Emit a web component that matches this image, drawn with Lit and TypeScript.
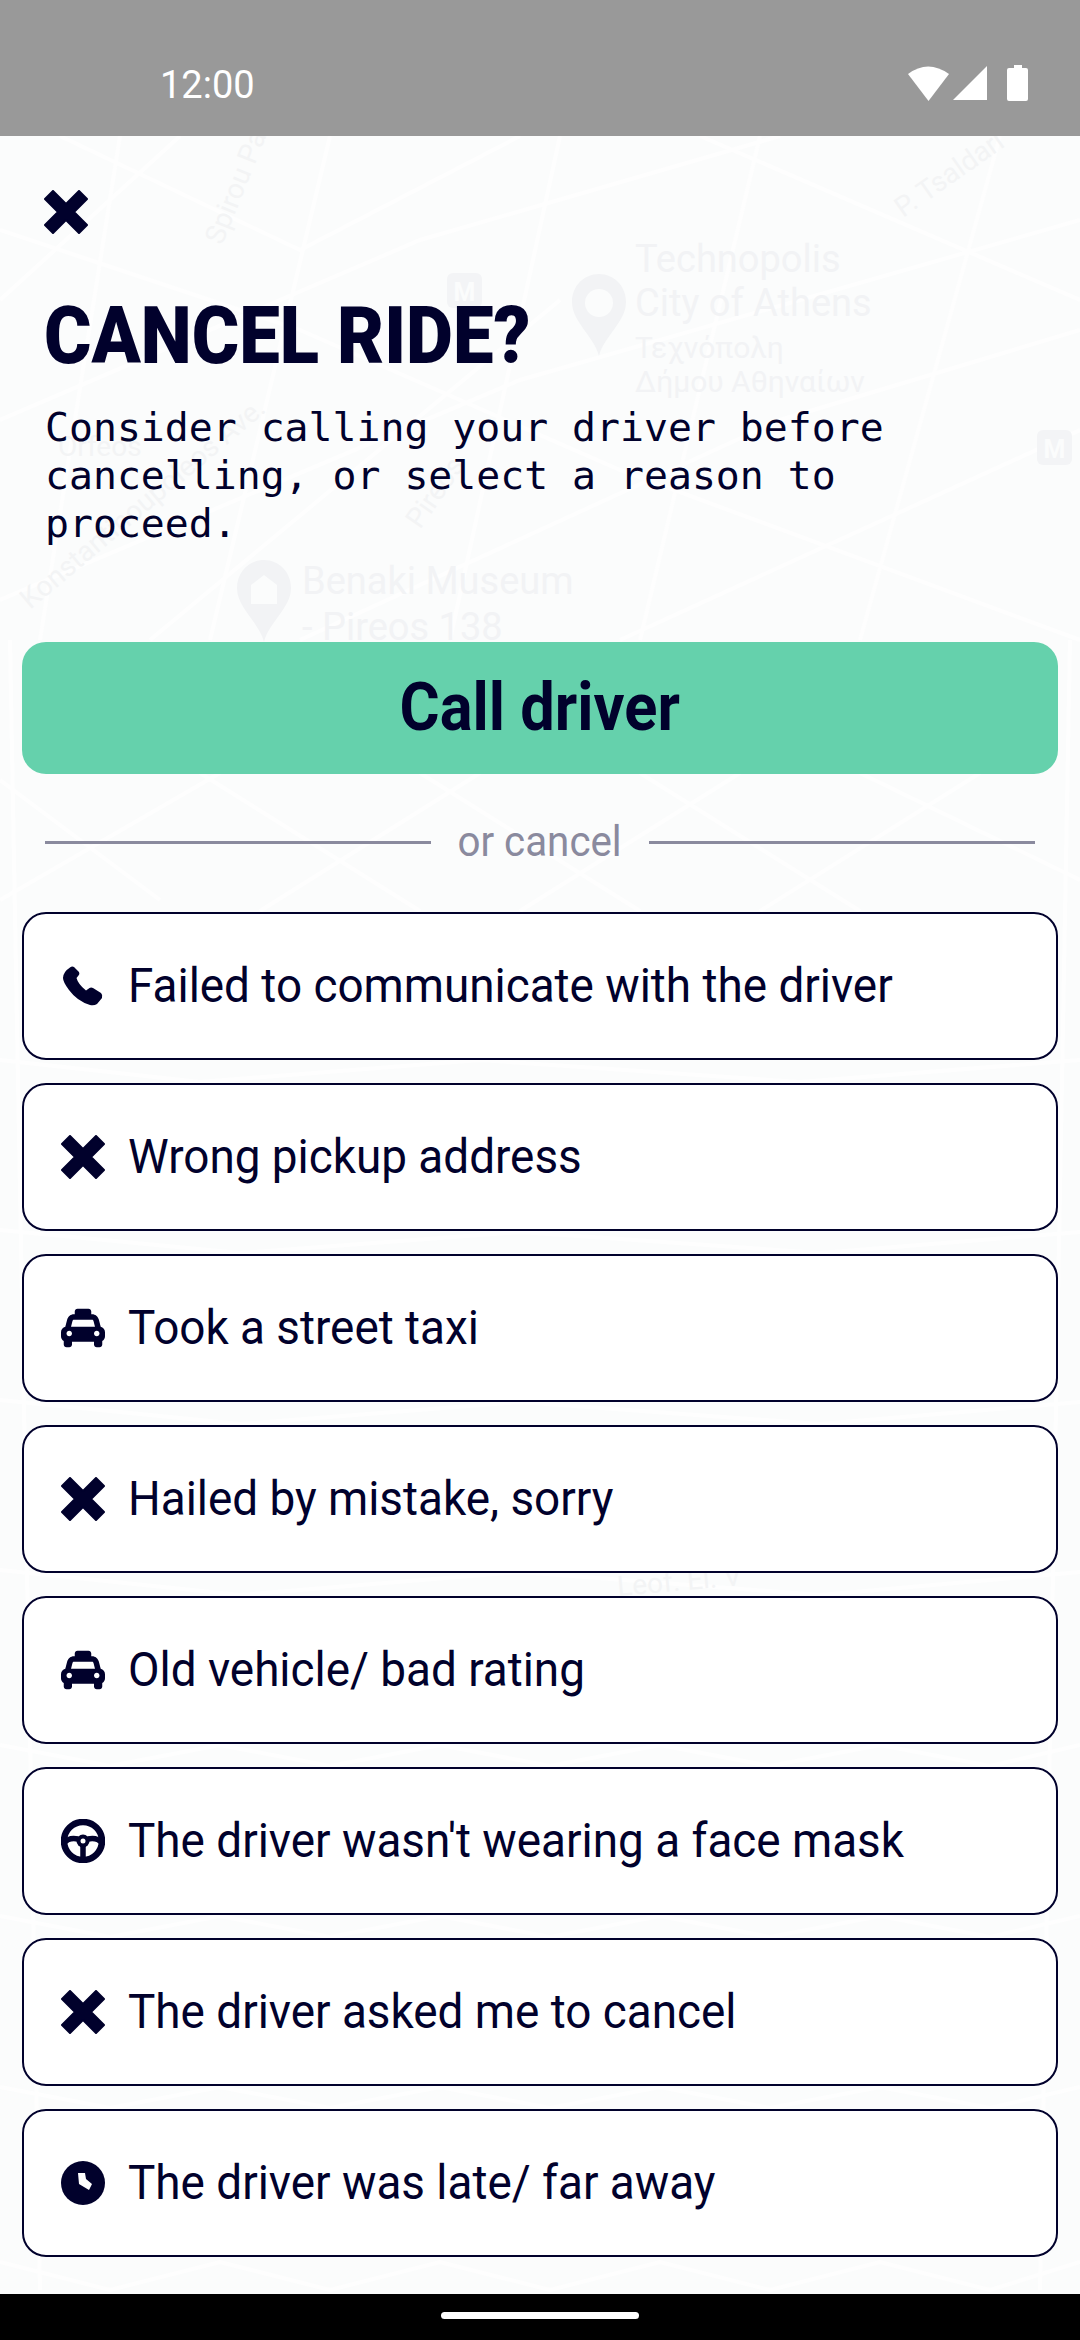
import { LitElement, html, css, svg } from "lit";
import { customElement } from "lit/decorators.js";

const X = svg`<path d="M9 1 22 14 35 1 43 9 30 22 43 35 35 43 22 30 9 43 1 35 14 22 1 9Z" fill="#01012c" stroke="#01012c" stroke-width="2" stroke-linejoin="round"/>`;
const icons: Record<string, unknown> = {
  x: html`<svg class="ic" viewBox="0 0 44 44">${X}</svg>`,
  phone: html`<svg class="ic" viewBox="-2 -2 44 44"><path fill="#01012c" d="M7 1.5Q9 0 11 1L16 6Q17 8 15.5 9.5L13.5 12Q15 18 23 24.5L26.5 22Q28 21 30 22L38 27Q40 29 39 32L34 38Q31 40 27 39 14 35 6 24 0 16 0 12 0 6 7 1.5Z"/></svg>`,
  taxi: html`<svg class="ic" viewBox="0 0 512 512"><path fill="#01012c" d="M462 241.64l-22-84.84c-9.6-35.2-41.6-60.8-76.8-60.8H352V64c0-17.67-14.33-32-32-32H192c-17.67 0-32 14.33-32 32v32h-11.2c-35.2 0-67.2 25.6-76.8 60.8l-22 84.84C21.41 248.04 0 273.47 0 304v48c0 23.63 12.95 44.04 32 55.12V448c0 17.67 14.33 32 32 32h32c17.67 0 32-14.33 32-32v-32h256v32c0 17.67 14.33 32 32 32h32c17.67 0 32-14.33 32-32v-40.88c19.05-11.09 32-31.5 32-55.12v-48c0-30.53-21.41-55.96-50-62.36zM96 352c-17.67 0-32-14.33-32-32s14.33-32 32-32 32 14.33 32 32-14.33 32-32 32zm20.55-112l17.2-66.36c2.23-8.16 9.59-13.84 15.05-13.84h214.4c5.46 0 12.82 5.68 15.05 13.84L395.45 240h-278.9zM416 352c-17.67 0-32-14.33-32-32s14.33-32 32-32 32 14.33 32 32-14.33 32-32 32z"/></svg>`,
  wheel: html`<svg class="ic" viewBox="0 0 44 44"><circle cx="22" cy="22" r="19" fill="none" stroke="#01012c" stroke-width="6.500"/><path d="M3 24Q8 18 17 20M41 24Q36 18 27 20M22 25V41" fill="none" stroke="#01012c" stroke-width="5.500"/><circle cx="22" cy="22" r="6.500" fill="#01012c"/><circle cx="22" cy="22" r="2.500" fill="#fff"/></svg>`,
  clock: html`<svg class="ic" viewBox="0 0 44 44"><circle cx="22" cy="22" r="22" fill="#01012c"/><path d="M17 12H24L25 18 31 23 28 29 18 23Z" fill="#fff"/></svg>`,
};

const rows: [string, string][] = [
  ["phone", "Failed to communicate with the driver"],
  ["x", "Wrong pickup address"],
  ["taxi", "Took a street taxi"],
  ["x", "Hailed by mistake, sorry"],
  ["taxi", "Old vehicle/ bad rating"],
  ["wheel", "The driver wasn't wearing a face mask"],
  ["x", "The driver asked me to cancel"],
  ["clock", "The driver was late/ far away"],
];

const streets = [
  "M0 230 L300 330 L620 470 L1080 640","M120 136 L40 640","M330 136 L210 640","M560 136 L450 640","M760 136 L640 640",
  "M1000 136 L860 640","M0 420 L420 240 L780 136","M0 600 L520 380 L1080 220","M300 640 L780 420 L1080 330",
  "M0 300 L180 136 M150 640 L560 300 M620 640 L1080 430 M700 136 L1080 300 M60 136 L300 250 L520 136",
  "M0 780 L160 900 M200 773 L420 911 M420 773 L640 911 M640 773 L860 911 M860 773 L1080 880","M0 900 L220 773 M260 911 L480 773 M520 911 L740 773 M760 911 L980 773",
  "M0 1060 L200 1082 L480 1060 L800 1082 L1080 1060","M0 1230 L240 1253 L520 1232 L820 1253 L1080 1232","M0 1400 L240 1424 L520 1402 L820 1424 L1080 1402",
  "M0 1570 L240 1595 L520 1572 L820 1595 L1080 1572","M0 1745 L110 1766 L220 1745 L330 1766 L440 1745 L550 1766 L660 1745 L770 1766 L880 1745 L990 1766 L1080 1745",
  "M0 1916 L110 1937 L220 1916 L330 1937 L440 1916 L550 1937 L660 1916 L770 1937 L880 1916 L990 1937 L1080 1916",
  "M0 2087 L110 2108 L220 2087 L330 2108 L440 2087 L550 2108 L660 2087 L770 2108 L880 2087 L990 2108 L1080 2087",
  "M0 2262 L110 2290 L220 2262 L330 2290 L440 2262 L550 2290 L660 2262 L770 2290 L880 2262 L990 2290 L1080 2262",
  "M10 640 L40 2290","M1070 640 L1040 2290",
];

const pin = (x: number, y: number) => svg`<path transform="translate(${x} ${y})" fill="#f2f3f5" d="M27 0C12 0 0 12 0 28 0 48 22 62 27 82 32 62 54 48 54 28 54 12 42 0 27 0Z"/>`;
const metro = (x: number, y: number) => svg`<rect x=${x} y=${y} width="35" height="35" rx="6" fill="#f3f4f6"/><text class="m" x=${x + 17.5} y=${y + 28} text-anchor="middle">M</text>`;

@customElement("app-root")
export class AppRoot extends LitElement {
  static styles = css`
    :host { display: block; width: 1080px; height: 2340px; overflow: hidden; color: #01012c; font-family: "Roboto", sans-serif; }
    .page { display: flex; flex-direction: column; height: 2340px; }
    .status { height: 136px; flex: none; background: #999; display: flex; align-items: flex-start; justify-content: space-between; padding: 62px 52px 0 160px; box-sizing: border-box; color: #fff; font: 400 38px/46px "Roboto", sans-serif; }
    .sicons { display: block; height: 38px; width: 120px; margin-top: 3px; }
    .main { flex: 1; position: relative; background: #fbfcfc; overflow: hidden; }
    .map { position: absolute; left: 0; top: -136px; width: 1080px; height: 2340px; }
    .map path.st { fill: none; stroke: #fefefe; stroke-width: 4; }
    .map text { font-family: "Roboto", sans-serif; fill: #f2f3f5; }
    .map .lbl { font-size: 38px; }
    .map .sm { font-size: 30px; }
    .map .rd { font-size: 28px; fill: #f3f4f5; }
    .map .m { font-size: 25px; font-weight: 700; fill: #fbfcfc; }
    .map .in { fill: #fbfcfc; }
    .content { position: relative; display: flex; flex-direction: column; padding: 0 22px; }
    .ic { width: 44px; height: 44px; display: block; flex: none; }
    .close { margin: 54px 0 0 22px; }
    h1 { margin: 56px 0 0 22px; font: 900 80px/92px "Roboto", sans-serif; white-space: nowrap; transform: scaleX(0.905); transform-origin: left center; }
    p { margin: 21px 0 0 23px; font: 400 39.8px/48px "DejaVu Sans Mono", monospace; white-space: pre-line; }
    .call { margin-top: 95px; height: 132px; border-radius: 24px; background: #65d1ac; display: flex; align-items: center; justify-content: center; font: 700 66px/70px "Roboto", sans-serif; }
    .call span { display: inline-block; transform: scaleX(0.93); }
    .div { display: flex; align-items: center; justify-content: center; gap: 28px; margin: 44px 23px 0; height: 48px; color: #8a8a9e; font: 400 42px/48px "Roboto", sans-serif; }
    .div span { display: flex; justify-content: center; width: 162px; white-space: nowrap; }
    .div b { display: block; flex: none; font-weight: 400; transform: scaleX(0.96); }
    .div i { flex: 1; height: 3px; background: #8a8a9e; }
    .list { display: flex; flex-direction: column; gap: 23px; margin-top: 46px; }
    .row { height: 148px; box-sizing: border-box; border: 2px solid #01012c; border-radius: 24px; background: #fff; display: flex; align-items: center; gap: 23px; padding-left: 37px; font: 450 48px/60px "Roboto", sans-serif; white-space: nowrap; }
    .row span { display: inline-block; transform: scaleX(0.955); transform-origin: left center; }
    .nav { height: 46px; flex: none; background: #000; display: flex; justify-content: center; padding-top: 18px; box-sizing: border-box; }
    .pill { width: 198px; height: 7px; border-radius: 4px; background: #fff; }
  `;

  render() {
    return html`<div class="page">
      <div class="status">
        <span>12:00</span>
        <svg class="sicons" viewBox="0 0 120 38" aria-hidden="true">
          <path fill="#fff" d="M0 9Q20 -6 41 9L20.500 36Z"/>
          <path fill="#fff" d="M45 35 79 1V35Z"/>
          <path fill="#fff" d="M99 5Q99 3 101 3H106V0H114V3H118Q120 3 120 5V34Q120 36 118 36H101Q99 36 99 34Z"/>
        </svg>
      </div>
      <div class="main">
        <svg class="map" viewBox="0 0 1080 2340" aria-hidden="true">
          ${streets.map((d) => svg`<path class="st" d=${d}/>`)}
          ${pin(572, 274)} ${pin(237, 560)} ${metro(447, 273)} ${metro(1037, 430)}
          <circle class="in" cx="599" cy="303" r="14"/>
          <path class="in" d="M251 585 264 575 277 585V604H251Z"/>
          <text class="lbl" x="635" y="272">Technopolis</text>
          <text class="lbl" x="635" y="316">City of Athens</text>
          <text class="lbl sm" x="635" y="358">Τεχνόπολη</text>
          <text class="lbl sm" x="635" y="392">Δήμου Αθηναίων</text>
          <text class="lbl" x="302" y="594">Benaki Museum</text>
          <text class="lbl" x="302" y="640">- Pireos 138</text>
          <text class="rd" x="58" y="456">Orfeos</text>
          <text class="rd" transform="translate(222 246) rotate(-68)">Spirou Pa</text>
          <text class="rd" transform="translate(903 218) rotate(-35)">P. Tsaldari</text>
          <text class="rd" transform="translate(30 610) rotate(-40)">Konstantinoupoleos Ave.</text>
          <text class="rd" transform="translate(420 530) rotate(-55)">Pireos</text>
          <text class="rd" transform="translate(618 1596) rotate(-5)">Leof. El. V</text>
        </svg>
        <div class="content">
          <div class="close">${icons.x}</div>
          <h1>CANCEL RIDE?</h1>
          <p>Consider calling your driver before
cancelling, or select a reason to
proceed.</p>
          <div class="call"><span>Call driver</span></div>
          <div class="div"><i></i><span><b>or cancel</b></span><i></i></div>
          <div class="list">
            ${rows.map(([ic, t]) => html`<div class="row">${icons[ic]}<span>${t}</span></div>`)}
          </div>
        </div>
      </div>
      <div class="nav"><div class="pill"></div></div>
    </div>`;
  }
}
